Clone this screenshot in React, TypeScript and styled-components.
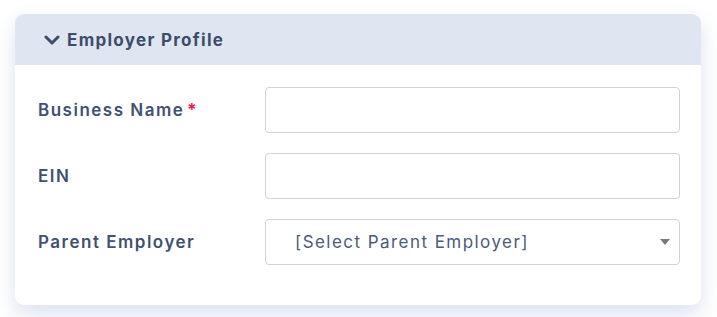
import React from 'react'
import styled, { createGlobalStyle } from 'styled-components'

const GlobalStyle = createGlobalStyle`
  html, body {
    margin: 0;
    padding: 0;
    background: #ffffff;
  }
  body {
    font-family: Inter, 'Open Sans', Arial, sans-serif;
  }
`

const Page = styled.div`
  width: 717px;
  height: 317px;
  box-sizing: border-box;
  padding: 14px 16px 0 15px;
  background: #ffffff;
  overflow: hidden;
`

const Card = styled.section`
  width: 686px;
  background: #ffffff;
  border-radius: 9px;
  box-shadow: 0 9px 20px rgba(160, 175, 215, 0.38);
  overflow: hidden;
`

const Header = styled.div`
  display: flex;
  align-items: center;
  gap: 7px;
  height: 51px;
  padding: 0 0 0 29px;
  background: #e0e6f1;
  color: #3c4d6b;
  font-size: 17px;
  font-weight: 700;
  letter-spacing: 1.3px;
`

const Body = styled.div`
  display: flex;
  flex-direction: column;
  gap: 20px;
  padding: 22px 21px 40px 23px;
`

const Row = styled.div`
  display: grid;
  grid-template-columns: 227px 1fr;
  align-items: center;
`

const Label = styled.label`
  color: #3f5172;
  font-size: 17px;
  font-weight: 600;
  letter-spacing: 1.5px;
`

const Required = styled.span`
  color: #f0134d;
  margin-left: 3px;
`

const Field = styled.div`
  position: relative;
  height: 46px;
  box-sizing: border-box;
  border: 1px solid #cfd2d8;
  border-radius: 4px;
  background: #ffffff;
`

const TextInput = styled.input`
  width: 100%;
  height: 100%;
  box-sizing: border-box;
  border: none;
  outline: none;
  background: transparent;
  padding: 0 14px;
  font-family: inherit;
  font-size: 16px;
  color: #3f5172;
`

const SelectText = styled.div`
  display: flex;
  align-items: center;
  height: 100%;
  padding-left: 29px;
  color: #4a5b7b;
  font-size: 17px;
  font-weight: 400;
  letter-spacing: 1.45px;
`

const Caret = styled.svg`
  position: absolute;
  right: 9px;
  top: 19px;
`

const Chevron = () => (
  <svg width="16" height="10" viewBox="0 0 16 10">
    <path d="M2 2 L8 8 L14 2" fill="none" stroke="#3c4d6b" strokeWidth="3" strokeLinecap="round" strokeLinejoin="round" />
  </svg>
)

export default function App() {
  return (
    <Page>
      <GlobalStyle />
      <Card>
        <Header>
          <Chevron />
          <span>Employer Profile</span>
        </Header>
        <Body>
          <Row>
            <Label>
              Business Name<Required>*</Required>
            </Label>
            <Field>
              <TextInput type="text" />
            </Field>
          </Row>
          <Row>
            <Label>EIN</Label>
            <Field>
              <TextInput type="text" />
            </Field>
          </Row>
          <Row>
            <Label>Parent Employer</Label>
            <Field>
              <SelectText>[Select Parent Employer]</SelectText>
              <Caret width="10" height="6" viewBox="0 0 10 6">
                <path d="M0 0 H10 L5 6 Z" fill="#7a7a7a" />
              </Caret>
            </Field>
          </Row>
        </Body>
      </Card>
    </Page>
  )
}
